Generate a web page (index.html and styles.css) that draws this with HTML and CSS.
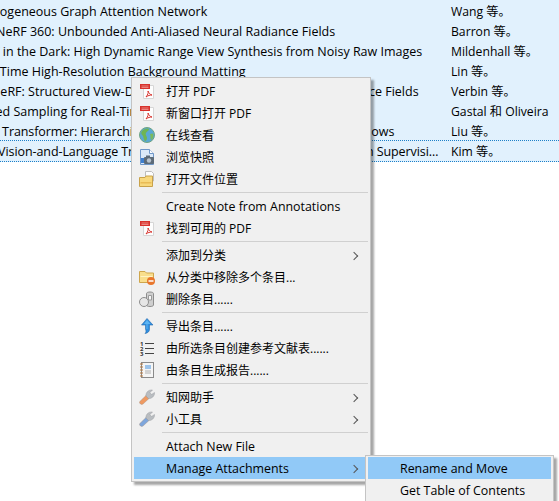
FILE: index.html
```html
<!DOCTYPE html>
<html lang="en">
<head>
    <meta charset="UTF-8">
    <title>Zotero</title>
    <link rel="stylesheet" href="styles.css">
</head>
<body>
    <svg class="defs" width="0" height="0">
        <symbol id="i-pdf" viewBox="0 0 16 16">
            <path d="M4.500 2.500H14.500V15.500H4.500Z" fill="#fdfdfd" stroke="#d6d6d6"/>
            <rect x="1" y="1" width="10" height="5" fill="#d8322c"/>
            <path d="M2.500 3H9.500M2.500 4.500H9.500" stroke="#f09a96" stroke-width=".8"/>
            <path d="M7 14C9 11.500 9.500 9.500 9 8C10 10.500 11 11.500 13 12C11 12 9 12.500 7 14Z" fill="none" stroke="#d8322c"/>
        </symbol>
        <symbol id="i-globe" viewBox="0 0 16 16">
            <circle cx="8" cy="8" r="7.500" fill="#5aa8d4"/>
            <path d="M3 4C5 2 8 1 10 2C10 4 8 4 7 6C6 8 8 9 8 11C8 13 7 14 6 14C4 12 5 9 3 8C2 7 2 5 3 4Z" fill="#6fb552"/>
            <path d="M11 7L14 6.500C15 9 14 12 12 13C11 11 12 9 11 7Z" fill="#7cbb5c"/>
            <circle cx="8" cy="8" r="7.500" fill="none" stroke="#6fa583"/>
        </symbol>
        <symbol id="i-snap" viewBox="0 0 16 16">
            <path d="M1.500 .5H10.500L14.500 4.500V15.500H1.500Z" fill="#dbe9f8" stroke="#6f97c8"/>
            <path d="M10.500 .5V4.500H14.500" fill="#fff" stroke="#6f97c8"/>
            <rect x="5" y="8" width="10" height="7" rx="1" fill="#5d6b78"/>
            <rect x="7" y="6.500" width="4" height="2" fill="#5d6b78"/>
            <circle cx="10" cy="11.500" r="2.200" fill="#b9c4cf"/>
            <rect x="2" y="9" width="3" height="5" fill="#3f7fce"/>
        </symbol>
        <symbol id="i-folder" viewBox="0 0 16 16">
            <path d="M6.500 .5H12.500L14.500 2.500V10H6.500Z" fill="#fdfdfd" stroke="#bdbdbd"/>
            <path d="M.5 6.500H6L7 5H13.500L13.500 15.500H.5Z" fill="#f8d87c" stroke="#c9a24a"/>
            <path d="M1.500 11H12.500V12.500H1.500Z" fill="#e9bb55"/>
        </symbol>
        <symbol id="i-remove" viewBox="0 0 16 16">
            <path d="M.5 2.500H6L7.500 4H14.500V13.500H.5Z" fill="#f9de8c" stroke="#cfa64c"/>
            <path d="M1.500 7.500H13.500" stroke="#fff3c4"/>
            <circle cx="12" cy="12" r="4" fill="#e8762c"/>
            <path d="M9.500 12H14.500" stroke="#fff" stroke-width="1.500"/>
        </symbol>
        <symbol id="i-trash" viewBox="0 0 16 16">
            <path d="M7.500 2.500C7.500 .5 14.500 .5 14.500 2.500V14C14.500 16 7.500 16 7.500 14Z" fill="#cfcfcf" stroke="#8d8d8d"/>
            <path d="M9.500 4.500H12.500V9H9.500Z" fill="#f6f6f6" stroke="#9a9a9a"/>
            <circle cx="5" cy="11" r="4.500" fill="#e6e6e6" stroke="#8d8d8d"/>
        </symbol>
        <symbol id="i-up" viewBox="0 0 16 16">
            <path d="M8 .5L14 7H10.500V11C10.500 13.500 9 15 6 15.500C7.500 14 7 12.500 6.500 11V7H2.500Z" fill="#2f8fe0" stroke="#2569ad" stroke-width=".6"/>
            <path d="M8 2L11.500 6H8.500V11H7.500V6H5Z" fill="#5cb4f2"/>
        </symbol>
        <symbol id="i-report" viewBox="0 0 16 16">
            <rect x="2.500" y=".5" width="12" height="15" fill="#f5f5f5" stroke="#8a8a8a"/>
            <path d="M1 2H4M1 5H4M1 8H4M1 11H4M1 14H4" stroke="#b5763a" stroke-width="1.200"/>
            <rect x="6" y="3" width="6" height="4" fill="#9cc3ea"/>
            <path d="M6 9H12M6 11H12" stroke="#b0b0b0"/>
        </symbol>
        <symbol id="i-wrench" viewBox="0 0 16 16">
            <path d="M.8 12.500L7 6.500L10 9.500L4 15C2.500 16.500 -.5 14 .8 12.500Z" fill="currentColor" stroke="#a08a7a" stroke-width=".4"/>
            <path d="M7 7C6.500 3.500 9.500 .5 13.500 1L11 3.500L12.500 5.500L15.500 3.500C16 7 12.500 10 9.500 9.500Z" fill="#b9bdc1" stroke="#8f9397" stroke-width=".4"/>
        </symbol>
    </svg>

    <div class="list">
        <div class="row"><div class="title t1">Heterogeneous Graph Attention Network</div><div class="author">Wang 等。</div></div>
        <div class="row"><div class="title t2">Mip-NeRF 360: Unbounded Anti-Aliased Neural Radiance Fields</div><div class="author">Barron 等。</div></div>
        <div class="row"><div class="title t3">NeRF in the Dark: High Dynamic Range View Synthesis from Noisy Raw Images</div><div class="author">Mildenhall 等。</div></div>
        <div class="row"><div class="title t4">Real-Time High-Resolution Background Matting</div><div class="author">Lin 等。</div></div>
        <div class="row"><div class="title t5">Ref-NeRF: Structured View-Dependent Appearance for Neural Radiance Fields</div><div class="author">Verbin 等。</div></div>
        <div class="row"><div class="title t6">Shared Sampling for Real-Time Alpha Matting</div><div class="author">Gastal 和 Oliveira</div></div>
        <div class="row"><div class="title t7">Swin Transformer: Hierarchical Vision Transformer using Shifted Windows</div><div class="author">Liu 等。</div></div>
        <div class="row current"><div class="title t8">ViLT: Vision-and-Language Transformer Without Convolution or Region Supervision</div><div class="author">Kim 等。</div></div>
    </div>

    <div class="menu main-menu">
        <div class="item"><svg class="icon"><use href="#i-pdf"/></svg>打开 PDF</div>
        <div class="item"><svg class="icon"><use href="#i-pdf"/></svg>新窗口打开 PDF</div>
        <div class="item"><svg class="icon"><use href="#i-globe"/></svg>在线查看</div>
        <div class="item"><svg class="icon"><use href="#i-snap"/></svg>浏览快照</div>
        <div class="item"><svg class="icon"><use href="#i-folder"/></svg>打开文件位置</div>
        <div class="sep"></div>
        <div class="item latin">Create Note from Annotations</div>
        <div class="item"><svg class="icon"><use href="#i-pdf"/></svg>找到可用的 PDF</div>
        <div class="sep"></div>
        <div class="item more">添加到分类</div>
        <div class="item"><svg class="icon"><use href="#i-remove"/></svg>从分类中移除多个条目...</div>
        <div class="item"><svg class="icon"><use href="#i-trash"/></svg>删除条目......</div>
        <div class="sep"></div>
        <div class="item"><svg class="icon"><use href="#i-up"/></svg>导出条目......</div>
        <div class="item">
            <svg class="icon" viewBox="0 0 16 16">
                <text class="nums" x="1" y="6">1</text>
                <text class="nums" x="1" y="11">2</text>
                <text class="nums" x="1" y="16">3</text>
                <path d="M6 3.500H15M6 8.500H15M6 13.500H15" stroke="#444" fill="none"/>
            </svg>由所选条目创建参考文献表......
        </div>
        <div class="item"><svg class="icon"><use href="#i-report"/></svg>由条目生成报告......</div>
        <div class="sep"></div>
        <div class="item more"><svg class="icon orange"><use href="#i-wrench"/></svg>知网助手</div>
        <div class="item more"><svg class="icon blue"><use href="#i-wrench"/></svg>小工具</div>
        <div class="sep"></div>
        <div class="item latin">Attach New File</div>
        <div class="item latin more active">Manage Attachments</div>
    </div>

    <div class="menu sub-menu">
        <div class="item latin active">Rename and Move</div>
        <div class="item latin">Get Table of Contents</div>
    </div>
</body>
</html>
```

FILE: styles.css
```css
*{
    box-sizing: border-box;
}
html, body{
    height: 100%;
}
body{
    margin: 0;
    background-color: #fff;
    overflow: hidden;
    position: relative;
    font-family: "Open Sans", "Noto Sans CJK SC", sans-serif;
    font-size: 12px;
    color: #000;
}
.defs{
    position: absolute;
}

/* item list behind the menu */
.list{
    background-color: #e1f1fd;
    padding-top: 1px;
}
.row{
    display: flex;
    height: 20px;
    line-height: 22px;
    white-space: nowrap;
}
.row.current{
    border-top: 1px dotted #1e80c8;
    border-bottom: 1px dotted #1e80c8;
    height: 22px;
    margin-top: -1px;
}
.title{
    flex: 1;
    min-width: 0;
    overflow: hidden;
    text-overflow: ellipsis;
    font-size: 12.5px;
    padding-right: 12px;
}
.author{
    width: 108px;
    flex: none;
    font-size: 12.2px;
}
.t1{ margin-left: -33px; }
.t2{ margin-left: -30px; }
.t3{ margin-left: -31px; }
.t4{ margin-left: -29px; }
.t5{ margin-left: -32px; }
.t6{ margin-left: -31px; }
.t7{ margin-left: -28px; letter-spacing: -0.1px; }
.t8{ margin-left: -32px; letter-spacing: -0.08px; }

/* context menus */
.menu{
    position: absolute;
    background-color: #f0f0f0;
    border: 1px solid #c4c4c4;
    box-shadow: 3px 3px 2px rgba(0, 0, 0, 0.35);
    padding: 2px;
}
.main-menu{
    left: 131px;
    top: 77px;
    width: 240px;
}
.sub-menu{
    left: 365px;
    top: 455px;
    width: 189px;
    padding-top: 1px;
}
.item{
    position: relative;
    height: 22px;
    line-height: 24px;
    padding-left: 32px;
    white-space: nowrap;
}
.latin{
    font-size: 12.4px;
}
.active{
    background-color: #91c9f7;
}
.more::after{
    content: "";
    position: absolute;
    right: 11px;
    top: 9px;
    width: 5px;
    height: 5px;
    border-top: 1px solid #555;
    border-right: 1px solid #555;
    transform: rotate(45deg);
}
.sep{
    height: 1px;
    margin: 2px 0 2px 28px;
    background-color: #d0d0d0;
}
.icon{
    position: absolute;
    left: 5px;
    top: 3px;
    width: 16px;
    height: 16px;
}
.orange{
    color: #ef9a62;
}
.blue{
    color: #7ea6dc;
}
.nums{
    font-size: 6px;
    font-weight: 700;
    fill: #333;
}
```
